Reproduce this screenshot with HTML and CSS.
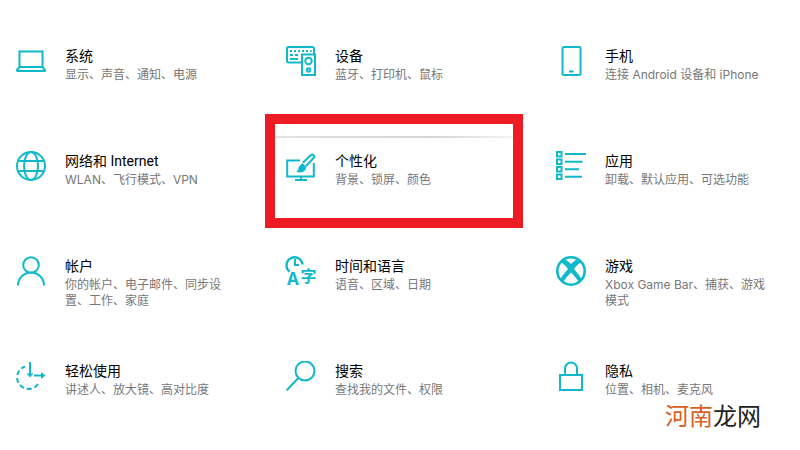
FILE: index.html
```html
<!DOCTYPE html>
<html lang="zh-CN">
<head>
<meta charset="utf-8">
<title>设置</title>
<link rel="stylesheet" href="styles.css">
</head>
<body>
<main class="grid">
  <div class="item">
    <svg class="icon" viewBox="0 0 30 30"><path d="M3.500 21V5.500h23V21"/><path d="M3.500 21L1 24a.6.6 0 0 0 .5 1h27a.6.6 0 0 0 .5-1l-2.500-3z"/></svg>
    <div class="text"><div class="title">系统</div><div class="sub">显示、声音、通知、电源</div></div>
  </div>
  <div class="item">
    <svg class="icon" viewBox="0 0 30 30"><path d="M15 16.500H2.500a1.500 1.500 0 0 1-1.500-1.500V2.500A1.500 1.500 0 0 1 2.500 1h24A1.500 1.500 0 0 1 28 2.500V8"/><path d="M4 5h2M8 5h2M12 5h2M16 5h2M20 5h2M24 5h1.500M4 9h3M9 9h3M4 13h8" stroke-width="2"/><rect x="16" y="8.500" width="13" height="20.500"/><circle cx="22.500" cy="15" r="3.200"/><circle cx="22.500" cy="24" r="1.700"/></svg>
    <div class="text"><div class="title">设备</div><div class="sub">蓝牙、打印机、鼠标</div></div>
  </div>
  <div class="item">
    <svg class="icon" viewBox="0 0 30 30"><rect x="6.500" y="1" width="18" height="28" rx="1.500"/><path d="M13 25.500h4.500"/></svg>
    <div class="text"><div class="title">手机</div><div class="sub">连接 Android 设备和 iPhone</div></div>
  </div>

  <div class="item">
    <svg class="icon" viewBox="0 0 30 30"><circle cx="15" cy="15" r="14"/><ellipse cx="15" cy="15" rx="7" ry="14"/><path d="M2.500 10h25M2.500 20h25"/></svg>
    <div class="text"><div class="title">网络和 Internet</div><div class="sub">WLAN、飞行模式、VPN</div></div>
  </div>
  <div class="item">
    <svg class="icon" viewBox="0 0 30 30"><path d="M14 9.500H1.200v16h26.600V12"/><path d="M15 25.500v3.500M9 29h12"/><path d="M17 11.500L25 4a2 2 0 0 1 2.800 2.800L20 15"/><path class="solid" d="M16.500 12l4 4-1.500 3.500c-2 2-5.500 2.500-9 1.500 2.500-1 2-3.500 3-5.500z"/></svg>
    <div class="text"><div class="title">个性化</div><div class="sub">背景、锁屏、颜色</div></div>
  </div>
  <div class="item">
    <svg class="icon" viewBox="0 0 30 30"><rect x="1" y="1" width="4.500" height="4.500"/><rect x="1" y="8.500" width="4.500" height="4.500"/><rect x="1" y="16" width="4.500" height="4.500"/><rect x="1" y="23.500" width="4.500" height="4.500"/><path d="M9 3h21M9 10.700h17.500M9 18.200h14M9 25.700h17"/></svg>
    <div class="text"><div class="title">应用</div><div class="sub">卸载、默认应用、可选功能</div></div>
  </div>

  <div class="item">
    <svg class="icon" viewBox="0 0 30 30"><circle cx="15" cy="9" r="7.800"/><path d="M2 29.500a13 13 0 0 1 26 0"/></svg>
    <div class="text"><div class="title">帐户</div><div class="sub">你的帐户、电子邮件、同步设置、工作、家庭</div></div>
  </div>
  <div class="item">
    <svg class="icon icon-open" viewBox="0 0 30 30"><path d="M3.500 15.500a8 8 0 1 1 13-7" stroke-width="2.400"/><path d="M9 3v6h4"/><text class="glyph" x="1" y="29">A</text><text class="glyph glyph-cjk" x="14.500" y="26">字</text></svg>
    <div class="text"><div class="title">时间和语言</div><div class="sub">语音、区域、日期</div></div>
  </div>
  <div class="item">
    <svg class="icon" viewBox="0 0 30 30"><circle cx="15" cy="15" r="13.700" stroke-width="2.600"/><path class="solid" d="M9.500 3.500C11 4.500 13 6 15 8C17 6 19 4.500 20.500 3.500L25 6.500C22 8 19.500 10.500 18 13C21 16.500 24.500 20.500 26 24L23 26.500C21.500 23.500 18 19.500 15 16.500C12 19.500 8.500 23.500 7 26.500L4 24C5.500 20.500 9 16.500 12 13C10.500 10.500 8 8 5 6.500Z"/></svg>
    <div class="text"><div class="title">游戏</div><div class="sub">Xbox Game Bar、捕获、游戏模式</div></div>
  </div>

  <div class="item">
    <svg class="icon" viewBox="0 0 30 30"><path d="M22 23A11.500 11.500 0 1 1 9 5.500" stroke-dasharray="5 2.800"/><path d="M14 1v13"/><path class="solid" d="M10.500 12.500h7l-3.500 4z"/><path d="M18 14.500h8"/><path class="solid" d="M25 11l4.500 3.500-4.500 3.500z"/></svg>
    <div class="text"><div class="title">轻松使用</div><div class="sub">讲述人、放大镜、高对比度</div></div>
  </div>
  <div class="item">
    <svg class="icon" viewBox="0 0 30 30"><circle cx="19" cy="10" r="9.500"/><path d="M.7 29.300L12.300 17"/></svg>
    <div class="text"><div class="title">搜索</div><div class="sub">查找我的文件、权限</div></div>
  </div>
  <div class="item">
    <svg class="icon" viewBox="0 0 30 30"><rect x="4" y="14" width="22" height="15"/><path d="M9 14V7.500a6 6 0 0 1 12 0V14"/></svg>
    <div class="text"><div class="title">隐私</div><div class="sub">位置、相机、麦克风</div></div>
  </div>
</main>
<div class="highlight"><div class="crease"></div></div>
<div class="watermark"><span class="wm-orange">河南</span>龙网</div>
</body>
</html>
```

FILE: styles.css
```css
html, body {
  margin: 0;
  padding: 0;
  background: #fff;
}
body {
  position: relative;
  width: 800px;
  height: 450px;
  overflow: hidden;
  font-family: "Roboto", "Noto Sans CJK SC", sans-serif;
}
.grid {
  display: grid;
  grid-template-columns: repeat(3, 270px);
  grid-auto-rows: 105px;
  padding-top: 46px;
}
.item {
  display: flex;
  gap: 20px;
  padding-left: 16px;
}
.icon {
  flex: none;
  width: 30px;
  height: 30px;
  fill: none;
  stroke: #0fb9cb;
  stroke-width: 2;
}
.icon-open {
  overflow: visible;
}
.icon .solid {
  fill: #0fb9cb;
  stroke: none;
}
.glyph {
  fill: #0fb9cb;
  stroke: none;
  font-family: "Open Sans", sans-serif;
  font-size: 17px;
  font-weight: 700;
}
.glyph-cjk {
  font-family: "Noto Sans CJK SC", sans-serif;
  font-size: 16px;
  font-weight: 700;
}
.text {
  width: 165px;
  margin-left: -1px;
}
.title {
  font-size: 14px;
  line-height: 21px;
  color: #000;
}
.sub {
  font-family: "Inter", "Noto Sans CJK SC", sans-serif;
  font-size: 12px;
  line-height: 16px;
  color: #777;
}
.highlight {
  position: absolute;
  left: 265px;
  top: 114px;
  width: 258px;
  height: 114px;
  box-sizing: border-box;
  border: 10px solid #ed1c24;
}
.crease {
  position: absolute;
  left: 0;
  right: 0;
  top: 12px;
  height: 2px;
  background: linear-gradient(to right, #e2e2e2, #d4d4d4 65%, #f4f4f4);
}
.watermark {
  position: absolute;
  left: 665px;
  top: 398px;
  font-family: "Noto Sans CJK SC", sans-serif;
  font-size: 24px;
  line-height: 34px;
  color: #222;
  white-space: nowrap;
}
.wm-orange {
  color: #d9601f;
}
```
